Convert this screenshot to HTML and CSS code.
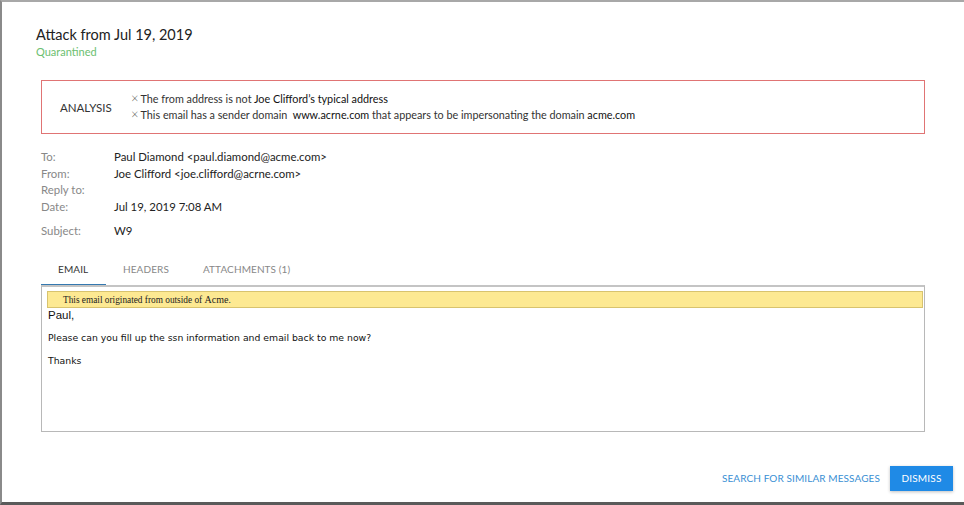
FILE: index.html
```html
<!DOCTYPE html>
<html>
<head>
<meta charset="utf-8">
<link rel="stylesheet" href="styles.css">
</head>
<body>
<div class="frame">
  <div class="modal">
    <header class="head">
      <h1 class="title">Attack from Jul 19, 2019</h1>
      <div class="status">Quarantined</div>
    </header>
    <section class="analysis">
      <div class="analysis-label">ANALYSIS</div>
      <ul class="analysis-list">
        <li><span class="x">&#xD7;</span>The from address is not <b>Joe Clifford’s typical address</b></li>
        <li><span class="x">&#xD7;</span>This email has a sender domain&nbsp; <b>www.acrne.com</b> that appears to be impersonating the domain <b>acme.com</b></li>
      </ul>
    </section>
    <dl class="meta">
      <div class="row"><dt>To:</dt><dd>Paul Diamond &lt;paul.diamond@acme.com&gt;</dd></div>
      <div class="row"><dt>From:</dt><dd>Joe Clifford &lt;joe.clifford@acrne.com&gt;</dd></div>
      <div class="row"><dt>Reply to:</dt><dd></dd></div>
      <div class="row row-date"><dt>Date:</dt><dd>Jul 19, 2019 7:08 AM</dd></div>
      <div class="row row-subject"><dt>Subject:</dt><dd>W9</dd></div>
    </dl>
    <nav class="tabs">
      <div class="tab active">EMAIL</div>
      <div class="tab">HEADERS</div>
      <div class="tab">ATTACHMENTS (1)</div>
    </nav>
    <div class="email">
      <div class="banner">This email originated from outside of <span class="acme">Acme</span>.</div>
      <p class="greet">Paul,</p>
      <p class="msg">Please can you fill up the ssn information and email back to me now?</p>
      <p class="msg">Thanks</p>
    </div>
    <footer class="actions">
      <a class="link-btn">SEARCH FOR SIMILAR MESSAGES</a>
      <a class="primary-btn">DISMISS</a>
    </footer>
  </div>
</div>
</body>
</html>
```
FILE: styles.css
```css
html, body {
  margin: 0;
  padding: 0;
  background: #fff;
}
body {
  font-family: Lato, "Liberation Sans", sans-serif;
  color: #333;
  width: 964px;
  height: 505px;
  overflow: hidden;
}
.frame {
  box-sizing: border-box;
  height: 505px;
  border-left: 2px solid #8a8a8a;
  border-top: 2px solid #a8a8a8;
  border-bottom: 3px solid #5a5a5a;
}
.modal {
  box-sizing: border-box;
  height: 100%;
  padding: 0 39px 0 39px;
  display: flex;
  flex-direction: column;
}
.head {
  padding-top: 23px;
  margin-left: -5px;
}
.title {
  margin: 0;
  font-size: 14.5px;
  font-weight: 400;
  color: #222;
  line-height: 20px;
}
.status {
  font-size: 11px;
  color: #6cc070;
  line-height: 14px;
}
.analysis {
  margin-top: 21px;
  height: 54px;
  box-sizing: border-box;
  border: 1.5px solid #e07474;
  display: flex;
  align-items: center;
  padding-left: 18px;
}
.analysis-label {
  font-size: 11.5px;
  color: #333;
  width: 71px;
}
.analysis-list {
  list-style: none;
  margin: 0;
  padding: 0;
  font-size: 10.8px;
  line-height: 16px;
  color: #333;
}
.analysis-list b {
  font-weight: 400;
  color: #111;
}
.x {
  color: #555;
  font-size: 13px;
  line-height: 10px;
  margin-right: 2px;
  font-weight: 300;
}
.meta {
  margin: 15px 0 0 0;
  font-size: 11.4px;
}
.row {
  display: flex;
  line-height: 16.5px;
  min-height: 16.5px;
}
.row-subject {
  margin-top: 8px;
}
.meta dt {
  width: 73px;
  color: #888;
  margin: 0;
}
.meta dd {
  margin: 0;
  color: #222;
}
.tabs {
  display: flex;
  margin-top: 13px;
  height: 34px;
}
.tab {
  font-size: 10px;
  color: #888;
  padding: 10px 17px 0 17px;
  box-sizing: border-box;
  height: 34px;
  letter-spacing: 0.1px;
}
.tab.active {
  color: #333;
  border-bottom: 3px solid #3579b0;
  width: 65px;
}
.email {
  box-sizing: border-box;
  height: 147px;
  border: 1.5px solid #b8b8b8;
  border-top: 2px solid #c4c4c4;
  margin-top: -2px;
  padding: 4px 1px 0 5px;
}
.banner {
  height: 17px;
  box-sizing: border-box;
  background: #fde992;
  border: 1px solid #d8c36e;
  font-family: "Liberation Serif", serif;
  font-size: 9.3px;
  line-height: 15px;
  padding-left: 15px;
  color: #222;
}
.acme {
  font-size: 10px;
}
.greet {
  margin: 0;
  font-family: "Liberation Sans", Arial, sans-serif;
  font-size: 11.5px;
  line-height: 14px;
  color: #111;
  padding-left: 1px;
}
.msg {
  margin: 9px 0 0 1px;
  font-family: "DejaVu Sans", Verdana, sans-serif;
  font-size: 9.3px;
  line-height: 14px;
  color: #111;
}
.actions {
  display: flex;
  justify-content: flex-end;
  align-items: center;
  margin-top: 34px;
  margin-right: -28px;
  gap: 10px;
}
.link-btn {
  font-size: 10px;
  color: #3a8fd4;
  letter-spacing: 0.1px;
}
.primary-btn {
  background: #1f8ae6;
  color: #fff;
  font-size: 10px;
  width: 63px;
  height: 25px;
  line-height: 25px;
  text-align: center;
  box-shadow: 0 1px 3px rgba(0,0,0,0.25);
  letter-spacing: 0.2px;
}
```
